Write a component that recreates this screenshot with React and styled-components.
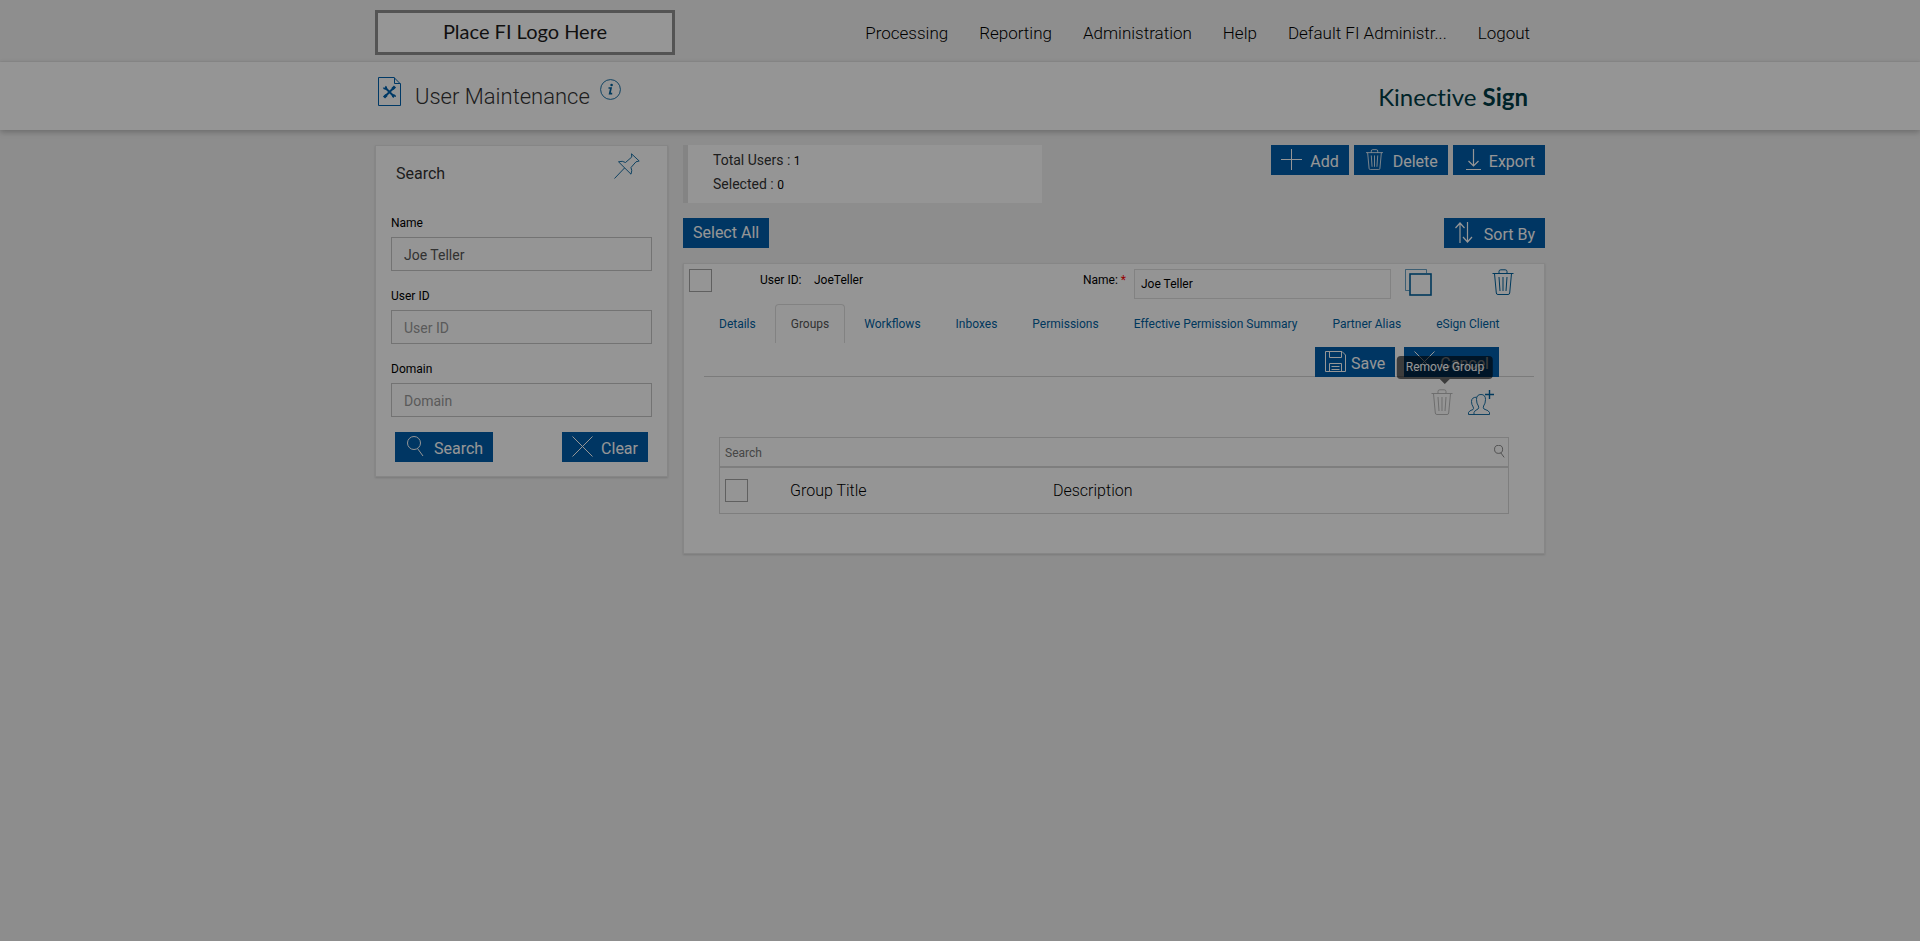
import { useState } from "react";
import styled, { createGlobalStyle } from "styled-components";

const GlobalStyle = createGlobalStyle`
  * {
    box-sizing: border-box;
  }

  body {
    margin: 0;
    min-height: 100vh;
    background-color: #f0f0f0;
    color: #000000;
    font-family: Roboto, "Liberation Sans", sans-serif;
    font-size: 12px;
    line-height: 16px;
  }

  button,
  input {
    font-family: inherit;
  }
`;

const Backdrop = styled.div`
  position: fixed;
  inset: 0;
  z-index: 10;
  background-color: rgba(0, 0, 0, 0.41);
  pointer-events: none;
`;

const Container = styled.div`
  display: flex;
  justify-content: space-between;
  max-width: 1170px;
  margin: 0 auto;
`;

const TopBar = styled.header`
  padding: 10px 0 6px;
  border-bottom: 1px solid #ececec;
  background-color: #f2f2f2;
`;

const FiLogo = styled.div`
  display: flex;
  justify-content: center;
  width: 300px;
  height: 45px;
  padding-top: 6px;
  border: 3px solid #909090;
  background-color: #ffffff;
  color: #1c1c1c;
  font-family: Lato, "Liberation Sans", sans-serif;
  font-size: 20px;
  line-height: 24px;
`;

const Nav = styled.nav`
  display: flex;
  align-items: center;
  gap: 31px;
  padding-right: 15px;
`;

const NavLink = styled.a`
  color: #000000;
  font-size: 17px;
  font-weight: 300;
  line-height: 20px;
  text-decoration: none;
`;

const TitleBar = styled.div`
  padding: 15px 0 19px;
  background-color: #fefefe;
  box-shadow: 0 2px 6px 0 rgba(0, 0, 0, 0.25);
`;

const TitleGroup = styled.div`
  display: flex;
  align-items: flex-start;
  padding-left: 3px;
`;

const Title = styled.h1`
  margin: 7px 10px 0 14px;
  color: #333333;
  font-size: 22px;
  font-weight: 300;
  line-height: 26px;
`;

const InfoButton = styled.button`
  display: flex;
  margin-top: 2px;
  padding: 0;
  border: none;
  background: none;
`;

const Brand = styled.div`
  padding: 6px 17px 0 0;
  color: #003c46;
  font-family: Lato, "Liberation Sans", sans-serif;
  font-size: 24px;
  font-variant-ligatures: none;
  line-height: 28px;
`;

const Content = styled.main`
  display: grid;
  grid-template-columns: 293px 1fr;
  align-items: start;
  gap: 15px;
  max-width: 1170px;
  margin: 15px auto 0;
`;

const Panel = styled.section`
  border: 1px solid #e4e4e4;
  background-color: #fefefe;
  box-shadow: 0 1px 2px 0 rgba(0, 0, 0, 0.15);
`;

const SearchPanel = styled(Panel)`
  padding: 7px 15px 14px;
`;

const SearchHeader = styled.div`
  display: flex;
  justify-content: space-between;
  margin-bottom: 29px;
  padding: 0 12px 0 5px;
`;

const SearchTitle = styled.h2`
  margin: 11px 0 0;
  color: #333333;
  font-size: 16px;
  font-weight: 400;
  line-height: 20px;
`;

const IconButton = styled.button`
  display: flex;
  padding: 0;
  border: none;
  background: none;
`;

const Field = styled.div`
  display: flex;
  flex-direction: column;
  gap: 3px;
  margin-bottom: 15px;
`;

const FieldLabel = styled.label`
  line-height: 21px;
`;

const FieldInput = styled.input`
  width: 100%;
  height: 34px;
  padding: 2px 12px 0;
  border: 1px solid #c4c4c4;
  background-color: #fefefe;
  color: #555555;
  font-size: 14px;

  &::placeholder {
    color: #999999;
  }
`;

const ButtonRow = styled.div`
  display: flex;
  justify-content: ${(props) => props.$justify || "flex-start"};
  gap: 5px;
  padding: ${(props) => props.$padding || "0"};
`;

const Button = styled.button`
  display: flex;
  align-items: flex-start;
  gap: ${(props) => (props.$tight ? "5px" : "8px")};
  height: 30px;
  padding: 4px 10px 0;
  border: none;
  background-color: #005ca8;
  color: #ffffff;
  font-size: 16px;
  line-height: 20px;

  span {
    padding-top: ${(props) => (props.$textOnly ? "1px" : "3px")};
  }

  &:hover {
    cursor: pointer;
  }
`;

const Summary = styled.div`
  width: 359px;
  height: 58px;
  padding: 3px 25px;
  border-left: 5px solid #e0e0e0;
  background-color: #fefefe;
  color: #333333;
  font-size: 14px;
  line-height: 24px;

  b {
    color: #000000;
    font-size: 12px;
    font-weight: 400;
    line-height: 16px;
  }
`;

const Spread = styled.div`
  display: flex;
  justify-content: space-between;
  align-items: flex-start;
  margin-bottom: 15px;
`;

const UserCard = styled(Panel)`
  padding: 5px 10px 39px 5px;
`;

const UserRow = styled.div`
  display: grid;
  grid-template-columns: 71px 54px 1fr 51px 257px 14px 27px 58px 44px;
  align-items: start;
  margin-bottom: 5px;

  > span,
  > label {
    line-height: 22px;
  }
`;

const Checkbox = styled.input`
  appearance: none;
  display: block;
  width: 23px;
  height: 23px;
  margin: 0;
  border: 1px solid #a4a4a4;

  &:checked {
    background-color: #005ca8;
  }
`;

const Required = styled.span`
  color: #ff0000;
`;

const NameInput = styled.input`
  width: 100%;
  height: 30px;
  padding: 0 6px;
  border: 1px solid #dddddd;
  background-color: #fcfcfc;
  color: #000000;
  font-size: 12px;
`;

const Tabs = styled.div`
  display: flex;
  gap: 3px;
  padding-left: 14px;
`;

const Tab = styled.button`
  height: 39px;
  padding: 0 15px;
  border: 1px solid transparent;
  border-color: ${(props) => (props.$active ? "#dddddd" : "transparent")};
  border-bottom: none;
  border-radius: 4px 4px 0 0;
  background: none;
  color: ${(props) => (props.$active ? "#555555" : "#005f9e")};
  font-size: 12px;
  line-height: 16px;
`;

const TabActions = styled.div`
  display: flex;
  justify-content: flex-end;
  gap: 9px;
  margin: 4px 0 0 15px;
  padding-right: 35px;
  box-shadow: inset 0 -1px 0 0 #d2d2d2;
`;

const GroupTools = styled.div`
  display: flex;
  justify-content: flex-end;
  gap: 7px;
  margin-bottom: 22px;
  padding: 12px 40px 0 0;
`;

const TooltipAnchor = styled.div`
  position: relative;
  padding-right: 6px;
`;

const Tooltip = styled.div`
  position: absolute;
  bottom: 100%;
  left: 50%;
  margin-bottom: 10px;
  padding: 3px 9px;
  border-radius: 4px;
  background-color: rgba(0, 0, 0, 0.6);
  color: #ffffff;
  font-size: 12px;
  line-height: 17px;
  white-space: nowrap;
  transform: translateX(-50%);

  &::after {
    content: "";
    position: absolute;
    top: 100%;
    left: 50%;
    margin-left: -5px;
    border: 5px solid transparent;
    border-top-color: rgba(0, 0, 0, 0.6);
    border-bottom: none;
  }
`;

const GroupSearch = styled.div`
  display: flex;
  align-items: flex-start;
  margin: 0 25px 0 30px;
  padding: 0 2px 0 5px;
  border: 1px solid #d6d6d6;
  color: #444444;
`;

const GroupSearchInput = styled.input`
  flex: 1;
  height: 28px;
  padding: 2px 0 0;
  border: none;
  background: none;
  font-size: 12px;

  &::placeholder {
    color: #777777;
  }
`;

const GroupTableWrap = styled.div`
  margin: 0 25px 0 30px;
  border: 1px solid #d6d6d6;
`;

const GroupTable = styled.table`
  width: 100%;
  border-collapse: collapse;
  table-layout: fixed;
`;

const HeadCell = styled.th`
  width: ${(props) => props.$width || "auto"};
  height: 45px;
  padding: 0 5px;
  font-size: 16px;
  font-weight: 300;
  text-align: left;
`;

const SearchIconWrap = styled.div`
  padding-top: 7px;
`;

function Icon({ size = 21, viewBox = "0 0 21 21", color = "currentColor", stroke = 1, children }) {
  return (
    <svg
      width={size}
      height={size}
      viewBox={viewBox}
      fill="none"
      stroke={color}
      strokeWidth={stroke}
      aria-hidden="true"
    >
      {children}
    </svg>
  );
}

const PlusIcon = () => (
  <Icon>
    <path d="M10.5 0V21M0 10.5H21" />
  </Icon>
);

const CrossIcon = () => (
  <Icon>
    <path d="M.5 .5L20.5 20.5M20.5 .5L.5 20.5" />
  </Icon>
);

const MagnifierIcon = ({ size }) => (
  <Icon size={size}>
    <circle cx="9" cy="7" r="6.5" />
    <path d="M12.5 12.5L18 20" />
  </Icon>
);

const DownloadIcon = () => (
  <Icon>
    <path d="M10.5 0V17M5.5 12L10.5 17L15.5 12M3 20.5H18" strokeWidth="1.2" />
  </Icon>
);

const SortIcon = () => (
  <Icon size={22} viewBox="0 0 22 22" stroke={1.2}>
    <path d="M6 21V1M1.5 6L6 1L10.5 6M13.5 0V20M9 15L13.5 20L18 15" />
  </Icon>
);

const SaveIcon = () => (
  <Icon>
    <path d="M.5 .5H17L20.5 4V20.5H.5ZM4.5 .5V6.5H16.5V.5M4.5 20.5V12.5H16.5V20.5M6.5 15.5H14.5M6.5 18.5H14.5" />
  </Icon>
);

const TrashIcon = ({ size, color }) => (
  <Icon size={size} viewBox="0 0 26 26" color={color}>
    <path d="M2.5 4.5H23.5M9 4.5V2.5Q9 .8 10.8 .8H15.2Q17 .8 17 2.5V4.5M4.5 4.5L6.3 24Q6.4 25.5 8 25.5H18Q19.6 25.5 19.7 24L21.5 4.5M9 8L10 22M13 8V22M17 8L16 22" />
  </Icon>
);

const CopyIcon = () => (
  <Icon size={27} viewBox="0 0 27 27" color="#00619c">
    <path d="M4.5 21.5H.5V.5H21.5V4" opacity="0.6" />
    <rect x="5" y="5" width="21" height="21" strokeWidth="1.6" />
  </Icon>
);

const PinIcon = () => (
  <Icon size={26} viewBox="0 0 26 26" color="#00619c" stroke={0.9}>
    <path d="M17.5 .8L25.2 8L22 8.8L17 14.5Q18.5 17.5 17 21.2L4.5 8.8Q8.5 7.5 11.5 9.5L17.8 4ZM10.5 15L.5 25.5" />
  </Icon>
);

const AddUserIcon = () => (
  <Icon size={26} viewBox="0 0 26 26" color="#00619c" stroke={0.9}>
    <path d="M6 25.5H21.5V23.5Q21 21.5 16 20Q14.8 19 15.6 17Q17.5 14.5 17.5 10.5Q17.5 5.5 13 5.5Q8.5 5.5 8.5 10.5Q8.5 14.5 10.4 17Q11.2 19 10 20Q6.5 21.5 6 23.5ZM6 25.5H.5V23.5Q1 21.8 5 20.5Q6 19.5 5.2 18Q3.5 15.8 3.5 12.5Q3.5 8.2 8.5 8.2" />
    <path d="M21.5 1V10M17 5.5H26" strokeWidth="1.4" />
  </Icon>
);

const PageIcon = () => (
  <svg width="23" height="29" viewBox="0 0 23 29" fill="none" stroke="#0062ae" aria-hidden="true">
    <path d="M.5 .5H16L22.5 7V28.5H.5ZM16.5 .5V6.5H22.5" />
    <path d="M7 10.5L16 19.5M16 10.5L7 19.5" strokeWidth="2" />
    <path
      d="M4.8 10.5Q5.2 13 8 12.8L9.2 11.5Q9.4 9 7.2 8.8L7.4 10.8ZM15 17.2Q18 17 18 20L16 19.6L15.8 21Q13.6 20.6 13.8 18.6Z"
      fill="#0062ae"
      stroke="none"
    />
    <path d="M14.5 12L17 9.5M8.5 18L6 20.5" strokeWidth="3" />
  </svg>
);

const InfoIcon = () => (
  <Icon color="#00619c">
    <circle cx="10.5" cy="10.5" r="9.9" strokeWidth="0.9" />
    <path d="M8.5 9H11L9.7 14.7H12.2" strokeWidth="1.7" />
    <circle cx="11.6" cy="6" r="1.3" fill="#00619c" stroke="none" />
  </Icon>
);

const navItems = [
  "Processing",
  "Reporting",
  "Administration",
  "Help",
  "Default FI Administr...",
  "Logout",
];

const tabs = [
  "Details",
  "Groups",
  "Workflows",
  "Inboxes",
  "Permissions",
  "Effective Permission Summary",
  "Partner Alias",
  "eSign Client",
];

const emptySearch = { name: "", userId: "", domain: "" };

function SearchForm() {
  const [values, setValues] = useState({ ...emptySearch, name: "Joe Teller" });

  function renderField(key, label) {
    return (
      <Field>
        <FieldLabel htmlFor={key}>{label}</FieldLabel>
        <FieldInput
          id={key}
          placeholder={label}
          value={values[key]}
          onChange={(e) => setValues({ ...values, [key]: e.target.value })}
        />
      </Field>
    );
  }

  return (
    <SearchPanel>
      <SearchHeader>
        <SearchTitle>Search</SearchTitle>
        <IconButton aria-label="Pin search">
          <PinIcon />
        </IconButton>
      </SearchHeader>
      {renderField("name", "Name")}
      {renderField("userId", "User ID")}
      {renderField("domain", "Domain")}
      <ButtonRow $justify="space-between" $padding="0 4px">
        <Button>
          <MagnifierIcon />
          <span>Search</span>
        </Button>
        <Button onClick={() => setValues(emptySearch)}>
          <CrossIcon />
          <span>Clear</span>
        </Button>
      </ButtonRow>
    </SearchPanel>
  );
}

function UserDetails() {
  const [name, setName] = useState("Joe Teller");
  const [activeTab, setActiveTab] = useState("Groups");

  return (
    <UserCard>
      <UserRow>
        <Checkbox type="checkbox" aria-label="Select JoeTeller" />
        <span>User ID:</span>
        <span>JoeTeller</span>
        <label htmlFor="userName">
          Name: <Required>*</Required>
        </label>
        <NameInput
          id="userName"
          value={name}
          onChange={(e) => setName(e.target.value)}
        />
        <div />
        <IconButton aria-label="Copy user">
          <CopyIcon />
        </IconButton>
        <div />
        <IconButton aria-label="Delete user">
          <TrashIcon size={26} color="#00619c" />
        </IconButton>
      </UserRow>
      <Tabs role="tablist">
        {tabs.map((tab) => (
          <Tab
            key={tab}
            role="tab"
            aria-selected={tab === activeTab}
            $active={tab === activeTab}
            onClick={() => setActiveTab(tab)}
          >
            {tab}
          </Tab>
        ))}
      </Tabs>
      <TabActions>
        <Button $tight>
          <SaveIcon />
          <span>Save</span>
        </Button>
        <Button $tight>
          <CrossIcon />
          <span>Cancel</span>
        </Button>
      </TabActions>
      <GroupTools>
        <TooltipAnchor>
          <IconButton aria-label="Remove Group" disabled>
            <TrashIcon size={26} color="#bbbbbb" />
          </IconButton>
          <Tooltip role="tooltip">Remove Group</Tooltip>
        </TooltipAnchor>
        <IconButton aria-label="Add Group">
          <AddUserIcon />
        </IconButton>
      </GroupTools>
      <GroupSearch>
        <GroupSearchInput placeholder="Search" aria-label="Search groups" />
        <SearchIconWrap>
          <MagnifierIcon size={13} />
        </SearchIconWrap>
      </GroupSearch>
      <GroupTableWrap>
        <GroupTable>
          <thead>
            <tr>
              <HeadCell $width="65px">
                <Checkbox type="checkbox" aria-label="Select all groups" />
              </HeadCell>
              <HeadCell $width="263px">Group Title</HeadCell>
              <HeadCell>Description</HeadCell>
            </tr>
          </thead>
        </GroupTable>
      </GroupTableWrap>
    </UserCard>
  );
}

export default function App() {
  return (
    <>
      <GlobalStyle />
      <TopBar>
        <Container>
          <FiLogo>Place FI Logo Here</FiLogo>
          <Nav>
            {navItems.map((item) => (
              <NavLink key={item} href="#">
                {item}
              </NavLink>
            ))}
          </Nav>
        </Container>
      </TopBar>
      <TitleBar>
        <Container>
          <TitleGroup>
            <PageIcon />
            <Title>User Maintenance</Title>
            <InfoButton aria-label="Page information">
              <InfoIcon />
            </InfoButton>
          </TitleGroup>
          <Brand>
            Kinective <strong>Sign</strong>
          </Brand>
        </Container>
      </TitleBar>
      <Content>
        <SearchForm />
        <div>
          <Spread>
            <Summary>
              <div>
                Total Users : <b>1</b>
              </div>
              <div>
                Selected : <b>0</b>
              </div>
            </Summary>
            <ButtonRow>
              <Button>
                <PlusIcon />
                <span>Add</span>
              </Button>
              <Button>
                <TrashIcon />
                <span>Delete</span>
              </Button>
              <Button $tight>
                <DownloadIcon />
                <span>Export</span>
              </Button>
            </ButtonRow>
          </Spread>
          <Spread>
            <Button $textOnly>
              <span>Select All</span>
            </Button>
            <Button>
              <SortIcon />
              <span>Sort By</span>
            </Button>
          </Spread>
          <UserDetails />
        </div>
      </Content>
      <Backdrop />
    </>
  );
}
